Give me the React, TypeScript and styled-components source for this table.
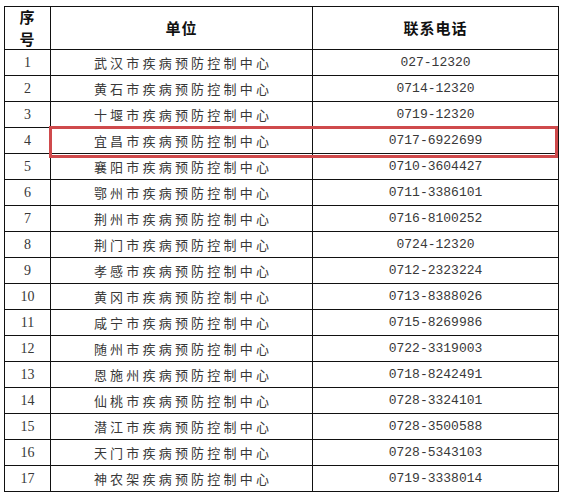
import React from "react";
import styled, { createGlobalStyle } from "styled-components";

const Global = createGlobalStyle`
  html, body { margin: 0; padding: 0; background: #ffffff; }
  body { width: 564px; height: 497px; overflow: hidden; }
`;

const HEADER_H = 43;
const ROW_H = 26;

const rows: [string, string][] = [
  ["武汉市疾病预防控制中心", "027-12320"],
  ["黄石市疾病预防控制中心", "0714-12320"],
  ["十堰市疾病预防控制中心", "0719-12320"],
  ["宜昌市疾病预防控制中心", "0717-6922699"],
  ["襄阳市疾病预防控制中心", "0710-3604427"],
  ["鄂州市疾病预防控制中心", "0711-3386101"],
  ["荆州市疾病预防控制中心", "0716-8100252"],
  ["荆门市疾病预防控制中心", "0724-12320"],
  ["孝感市疾病预防控制中心", "0712-2323224"],
  ["黄冈市疾病预防控制中心", "0713-8388026"],
  ["咸宁市疾病预防控制中心", "0715-8269986"],
  ["随州市疾病预防控制中心", "0722-3319003"],
  ["恩施州疾病预防控制中心", "0718-8242491"],
  ["仙桃市疾病预防控制中心", "0728-3324101"],
  ["潜江市疾病预防控制中心", "0728-3500588"],
  ["天门市疾病预防控制中心", "0728-5343103"],
  ["神农架疾病预防控制中心", "0719-3338014"],
];

const Page = styled.div`
  padding: 6px 0 0 4px;
`;

const Grid = styled.div`
  position: relative;
  display: grid;
  grid-template-columns: 46px 262px 246px;
  grid-auto-rows: ${ROW_H}px;
  grid-template-rows: ${HEADER_H}px;
  width: max-content;
  border-left: 1px solid #111;
  border-top: 1px solid #111;
`;

const Cell = styled.div<{ $kind: "index" | "unit" | "phone" }>`
  box-sizing: border-box;
  border-right: 1px solid #111;
  border-bottom: 1px solid #111;
  display: flex;
  align-items: center;
  justify-content: center;
  color: #383838;
  white-space: nowrap;
  font-family: ${(p) =>
    p.$kind === "unit"
      ? `"Noto Sans CJK SC", sans-serif`
      : p.$kind === "phone"
      ? `"Liberation Mono", monospace`
      : `"Liberation Serif", serif`};
  font-size: ${(p) => (p.$kind === "unit" ? "13px" : p.$kind === "phone" ? "13px" : "14px")};
  letter-spacing: ${(p) => (p.$kind === "unit" ? "3.2px" : "0")};
  padding-left: ${(p) => (p.$kind === "unit" ? "3px" : "0")};
  font-weight: 400;
`;

const HeadCell = styled.div`
  box-sizing: border-box;
  border-right: 1px solid #111;
  border-bottom: 1px solid #111;
  display: flex;
  align-items: center;
  justify-content: center;
  text-align: center;
  color: #111;
  font-family: "Noto Sans CJK SC", sans-serif;
  font-weight: 700;
  font-size: 15px;
  letter-spacing: 1px;
  line-height: 22px;
`;

const Highlight = styled.div<{ $row: number }>`
  position: absolute;
  left: 44px;
  top: ${(p) => HEADER_H + p.$row * ROW_H - 2}px;
  width: 509px;
  height: 32px;
  box-sizing: border-box;
  border: 3px solid #cf4a4c;
  pointer-events: none;
`;

export default function App() {
  return (
    <Page>
      <Global />
      <Grid>
        <HeadCell>
          序<br />号
        </HeadCell>
        <HeadCell>单位</HeadCell>
        <HeadCell>联系电话</HeadCell>
        {rows.map(([unit, phone], i) => (
          <React.Fragment key={i}>
            <Cell $kind="index">{i + 1}</Cell>
            <Cell $kind="unit">{unit}</Cell>
            <Cell $kind="phone">{phone}</Cell>
          </React.Fragment>
        ))}
        <Highlight $row={3} />
      </Grid>
    </Page>
  );
}
